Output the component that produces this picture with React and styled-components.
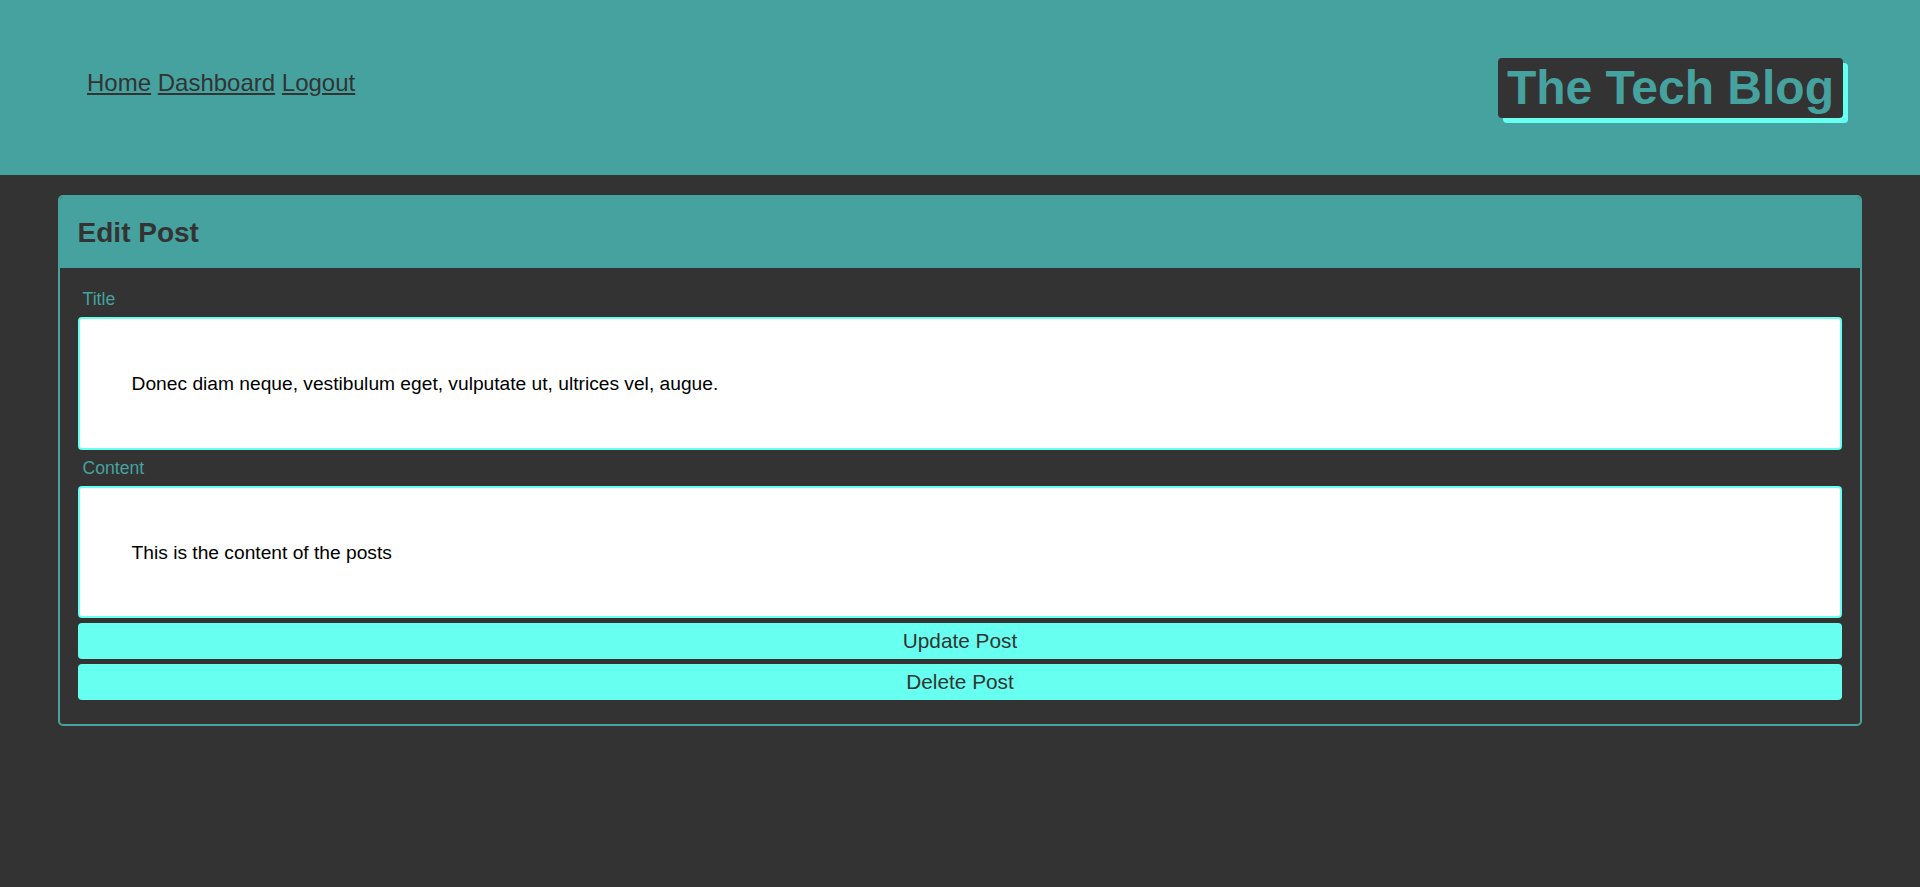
import styled, { createGlobalStyle } from "styled-components";

const teal = "#46a29f";
const cyan = "#66fff0";
const dark = "#333333";

const GlobalStyle = createGlobalStyle`
  body {
    margin: 0;
    background-color: ${dark};
    font-family: "Liberation Sans", Arial, Helvetica, sans-serif;
  }
`;

const Header = styled.header`
  background-color: ${teal};
  height: 175px;
  box-sizing: border-box;
  padding: 58px 77px 0 87px;
  display: flex;
  justify-content: space-between;
  align-items: flex-start;
`;

const Nav = styled.nav`
  margin-top: 11px;
  font-size: 24px;
  display: flex;
  gap: 6.7px;
`;

const NavLink = styled.a`
  color: ${dark};
  text-decoration: underline;
  cursor: pointer;
`;

const Logo = styled.h1`
  margin: 0;
  background-color: ${dark};
  color: ${teal};
  font-size: 48px;
  font-weight: 700;
  line-height: 60px;
  height: 60px;
  padding: 0 9px;
  border-radius: 4px;
  box-shadow: 5px 5px 0 ${cyan};
`;

const Main = styled.main`
  padding-top: 20px;
`;

const Card = styled.section`
  box-sizing: border-box;
  width: 94%;
  margin: 0 auto;
  border: 2px solid ${teal};
  border-radius: 5px;
  overflow: hidden;
`;

const CardHeader = styled.div`
  background-color: ${teal};
  height: 71px;
  box-sizing: border-box;
  padding: 20px 18px 0;
`;

const CardTitle = styled.h2`
  margin: 0;
  color: ${dark};
  font-size: 28px;
  font-weight: 700;
  line-height: 32px;
`;

const Form = styled.form`
  padding: 13px 18px 24px;
  display: flex;
  flex-direction: column;
`;

const Label = styled.label`
  display: block;
  color: ${teal};
  font-size: 17.6px;
  line-height: 20px;
  margin: 8px 0;
  padding: 0 5px;
`;

const fieldStyles = `
  display: block;
  width: 100%;
  box-sizing: border-box;
  border: 2px solid ${cyan};
  border-radius: 4px;
  background: #ffffff;
  color: #000000;
  font-family: "Liberation Sans", Arial, Helvetica, sans-serif;
  font-size: 19.2px;
  outline: none;
`;

const Input = styled.input`
  ${fieldStyles}
  height: 133px;
  padding: 0 52px;
`;

const TextArea = styled.textarea`
  ${fieldStyles}
  height: 132px;
  padding: 54px 52px 0;
  line-height: 22px;
  resize: none;
  overflow: hidden;
`;

const Button = styled.button`
  display: block;
  width: 100%;
  height: 36px;
  margin-top: 5px;
  border: none;
  border-radius: 4px;
  background-color: ${cyan};
  color: ${dark};
  font-family: "Liberation Sans", Arial, Helvetica, sans-serif;
  font-size: 20.8px;
  cursor: pointer;
`;

function App() {
  return (
    <>
      <GlobalStyle />
      <Header>
        <Nav>
          <NavLink>Home</NavLink>
          <NavLink>Dashboard</NavLink>
          <NavLink>Logout</NavLink>
        </Nav>
        <Logo>The Tech Blog</Logo>
      </Header>
      <Main>
        <Card>
          <CardHeader>
            <CardTitle>Edit Post</CardTitle>
          </CardHeader>
          <Form onSubmit={(e) => e.preventDefault()}>
            <Label htmlFor="title">Title</Label>
            <Input
              id="title"
              defaultValue="Donec diam neque, vestibulum eget, vulputate ut, ultrices vel, augue."
            />
            <Label htmlFor="content">Content</Label>
            <TextArea id="content" defaultValue="This is the content of the posts" />
            <Button type="submit">Update Post</Button>
            <Button type="button">Delete Post</Button>
          </Form>
        </Card>
      </Main>
    </>
  );
}

export default App;
